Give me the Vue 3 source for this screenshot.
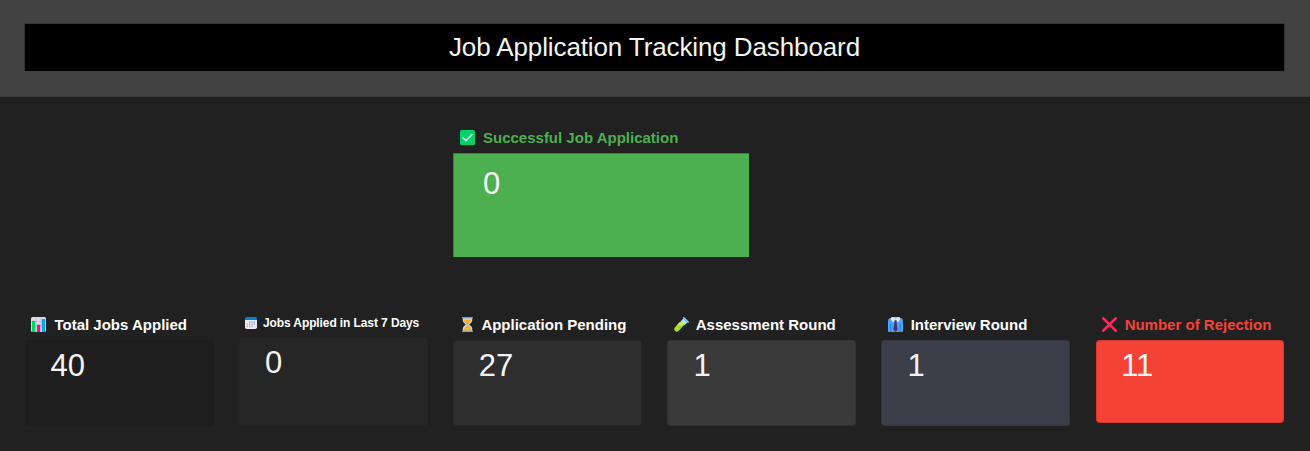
<script setup>
const stats = [
  { key: 'total', label: 'Total Jobs Applied', value: 40 },
  { key: 'recent', label: 'Jobs Applied in Last 7 Days', value: 0 },
  { key: 'pending', label: 'Application Pending', value: 27 },
  { key: 'assessment', label: 'Assessment Round', value: 1 },
  { key: 'interview', label: 'Interview Round', value: 1 },
  { key: 'rejected', label: 'Number of Rejection', value: 11 },
]
</script>

<template>
  <div class="dashboard">
    <header class="header">
      <h1 class="title"><span>Job Application Tracking Dashboard</span></h1>
    </header>

    <section class="success">
      <h2 class="label">
        <svg class="icon" viewBox="0 0 15 15">
          <rect width="15" height="15" rx="1.5" fill="#00d26a" />
          <path d="M3 7.8 5.9 10.7 12.1 4.5" fill="none" stroke="#f4f4f4" stroke-width="1.5" stroke-linecap="round" stroke-linejoin="round" />
        </svg>
        <span class="text">Successful Job Application</span>
      </h2>
      <div class="box"><span class="value">0</span></div>
    </section>

    <section class="stats">
      <article v-for="s in stats" :key="s.key" class="stat" :class="s.key">
        <h2 class="label">
          <svg v-if="s.key === 'total'" class="icon" viewBox="0 0 15 15">
            <rect width="15" height="15" rx="1.5" fill="#e1d8ec" />
            <path d="M0 4.5H15M0 9H15M5 0V15M10 0V15" stroke="#b4acbc" stroke-width=".6" />
            <path d="M1 15V4.2Q1 3.7 1.5 3.7H3.7Q4.2 3.7 4.2 4.2V15Z" fill="#00d26a" />
            <path d="M6 15V8.2Q6 7.7 6.5 7.7H8.6Q9.1 7.7 9.1 8.2V15Z" fill="#f70a8d" />
            <path d="M10.9 15V2.5Q10.9 2 11.4 2H13.7Q14.2 2 14.2 2.5V15Z" fill="#00a6ed" />
          </svg>
          <svg v-else-if="s.key === 'recent'" class="icon" viewBox="0 0 12 12">
            <path d="M0 2.5H12V10.2Q12 12 10.2 12H1.8Q0 12 0 10.2Z" fill="#efe8f5" />
            <path d="M0 3V1.5Q0 0 1.5 0H10.5Q12 0 12 1.5V3Z" fill="#0084ce" />
            <g fill="#b4acbc">
              <rect x="4" y="4.3" width="1.4" height="1.4" /><rect x="6.3" y="4.3" width="1.4" height="1.4" />
              <rect x="1.7" y="6.5" width="1.4" height="1.4" /><rect x="4" y="6.5" width="1.4" height="1.4" /><rect x="6.3" y="6.5" width="1.4" height="1.4" />
              <rect x="1.7" y="8.7" width="1.4" height="1.4" /><rect x="4" y="8.7" width="1.4" height="1.4" /><rect x="6.3" y="8.7" width="1.4" height="1.4" />
            </g>
            <path d="M8.6 4.3H10V7.9H8.6Z" fill="#83cbff" />
          </svg>
          <svg v-else-if="s.key === 'pending'" class="icon" viewBox="0 0 15 15">
            <path d="M2.8 1H12.2V3.7Q12.2 5.4 9.2 7.5 12.2 9.6 12.2 11.3V14H2.8V11.3Q2.8 9.6 5.8 7.5 2.8 5.4 2.8 3.7Z" fill="#aee0ff" />
            <path d="M4 2.8H11V4Q10.5 5.4 8.4 6.9V8.2L11 11.6V13.4H4V11.6L6.6 8.2V6.9Q4.5 5.4 4 4Z" fill="#ffb02e" />
            <rect x="2" width="11" height="1.4" rx=".5" fill="#9b9b9b" />
            <rect x="2" y="13.6" width="11" height="1.4" rx=".5" fill="#9b9b9b" />
          </svg>
          <svg v-else-if="s.key === 'assessment'" class="icon" viewBox="0 0 15 15">
            <path d="M9.2 1.6 13.4 5.8 9.9 8.4 5.8 5.5Z" fill="#aee0ff" />
            <path d="M5.6 5.2 10.6 7.4 4.8 13.7Q2.8 15.5 1 14 -.5 12.1 1.2 10Z" fill="#a6d92c" />
            <path d="M5.4 5.6H11L9.6 7.8Q6 8.8 3.2 7.9Z" fill="#c8f04a" />
            <path d="M9.8 .9 14.1 5.2" stroke="#83cbff" stroke-width="1.7" stroke-linecap="round" />
            <circle cx="3.1" cy="11.6" r=".8" fill="#d3f56c" /><circle cx="5.8" cy="10" r=".6" fill="#6fb51e" />
          </svg>
          <svg v-else-if="s.key === 'interview'" class="icon" viewBox="0 0 15 15">
            <path d="M4 .4H11L13.4 1.2Q15 2 15 4V14Q15 15 14 15H1Q0 15 0 14V4Q0 2 1.6 1.2Z" fill="#4aa5fa" />
            <path d="M2.7 7V15M12.3 7V15" stroke="#2374bd" stroke-width=".8" />
            <path d="M6.8 3H8.2L9.7 12.7 7.5 15 5.3 12.7Z" fill="#48356f" />
            <path d="M3.7 0H11.3L12.3 2.5 10 5.3 7.5 3.6 5 5.3 2.7 2.5Z" fill="#e6e6e6" />
            <path d="M6.3 3.2H8.7L8.2 5H6.8Z" fill="#503c7c" />
            <path d="M4.7 0H10.3L7.5 2Z" fill="#bebebe" />
          </svg>
          <svg v-else class="icon" viewBox="0 0 15 15">
            <path d="M1.3 1.3 13.7 13.7M13.7 1.3 1.3 13.7" stroke="#f92f60" stroke-width="2.6" stroke-linecap="round" />
          </svg>
          <span class="text">{{ s.label }}</span>
        </h2>
        <div class="box"><span class="value">{{ s.value }}</span></div>
      </article>
    </section>
  </div>
</template>

<style>
body {
  margin: 0;
  background: #212121;
}
</style>

<style scoped>
.dashboard {
  height: 451px;
  overflow: hidden;
  background: #212121;
  color: #f4f4f4;
  font-family: "Liberation Sans", Arial, sans-serif;
}
h1, h2 { margin: 0; }
.header {
  box-sizing: border-box;
  height: 97px;
  padding: 23px 25px 0 24px;
  background: #424242;
  border-bottom: 1px solid #3b3b3b;
}
.title {
  box-sizing: border-box;
  height: 48px;
  border: 1px solid #333;
  border-bottom: 0;
  background: #000;
  font-size: 26px;
  font-weight: 400;
  letter-spacing: -0.11px;
  line-height: 46px;
  text-align: center;
}
.success {
  width: 296px;
  margin-left: 453px;
  padding-top: 30px;
}
.label {
  display: flex;
  align-items: flex-start;
  height: 26px;
  padding-left: 7px;
  font-size: 15px;
  font-weight: 700;
  line-height: 22px;
  white-space: nowrap;
}
.icon {
  flex: none;
  width: 15px;
  height: 15px;
  margin: 3px 8px 0 0;
}
.box {
  box-sizing: border-box;
  border: 1px solid rgba(0, 0, 0, 0.12);
}
.value {
  display: block;
  font-size: 31px;
  line-height: 36px;
}
.success .label { color: #4caf50; }
.success .box {
  height: 104px;
  padding: 12px 0 0 29px;
  background: #4caf50;
  border-width: 1px 0 0 1px;
  border-color: #3b813d;
}
.stats {
  display: grid;
  grid-template-columns: repeat(6, 1fr);
  column-gap: 25.35px;
  margin: 57px 25.65px 0 24.8px;
}
.stat .box {
  height: 86px;
  padding: 7px 0 0 24.6px;
  border-radius: 4px;
}
.stat .label { padding-left: 6.7px; color: #fff; }
.total .box { background: #1e1e1e; border-color: rgba(0, 0, 0, 0.04); }
.stat.recent .label {
  height: 23px;
  padding-left: 6px;
  font-size: 12px;
  letter-spacing: -0.1px;
  line-height: 18px;
}
.recent .icon { width: 12px; height: 12px; margin: 3px 6px 0 0; }
.stat.recent .box { height: 89px; padding-left: 25px; background: #262626; border-color: rgba(0, 0, 0, 0.04); }
.pending .icon { margin-right: 6.6px; }
.pending .box { background: #2e2e2e; }
.assessment .icon { margin-right: 6.8px; }
.assessment .box { background: #3a3a3a; }
.interview .icon { margin-right: 7.6px; }
.interview .box { background: #3c3f4a; }
.stat.interview .box, .stat.assessment .box { padding-left: 25.2px; }
.stat.rejected .label { color: #f44336; }
.rejected .icon { margin-right: 7.4px; }
.stat.rejected .box { height: 83px; background: #f44336; }
</style>
